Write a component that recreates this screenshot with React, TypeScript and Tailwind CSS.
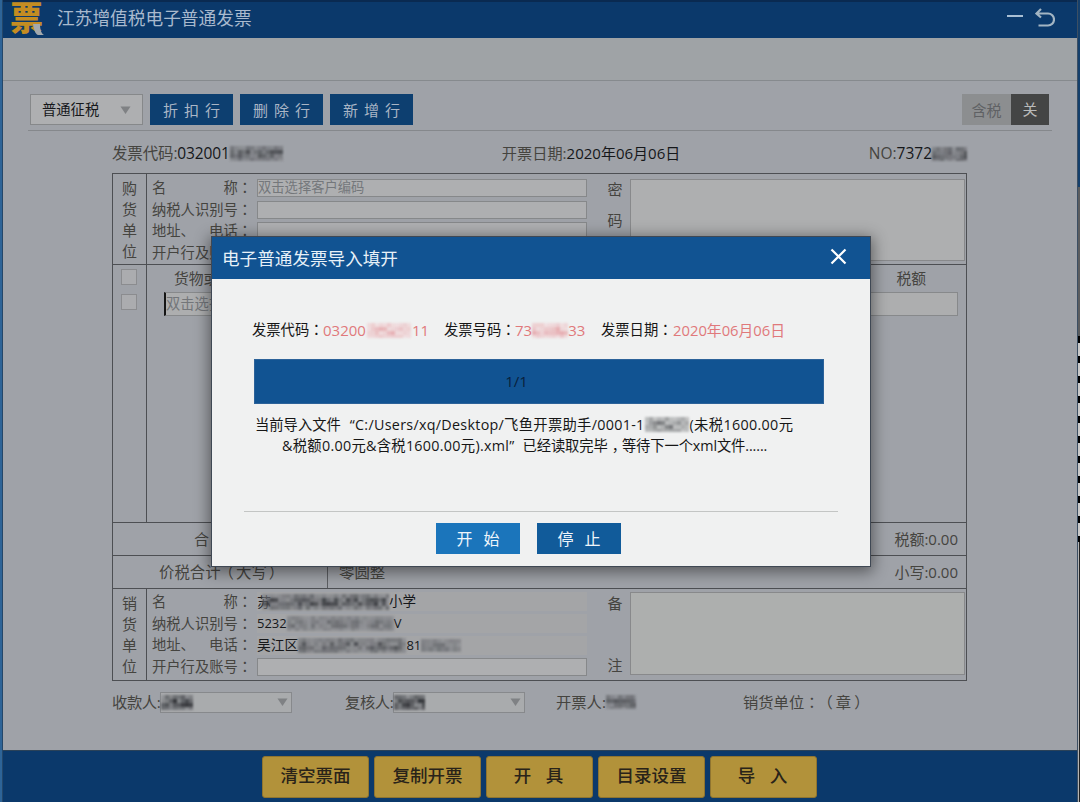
import React from "react";

/** Pixelated privacy cover for confidential values. */
function Mosaic({
  w,
  h = 14,
  color = "#33353a",
  base = "#8f9196",
  strength = 1,
  className = "",
}: {
  w: number;
  h?: number;
  color?: string;
  base?: string;
  strength?: number;
  className?: string;
}) {
  const size = 4;
  const cols = Math.ceil(w / size);
  const rows = Math.ceil(h / size);
  const cells: React.ReactNode[] = [];
  for (let r = 0; r < rows; r++) {
    for (let c = 0; c < cols; c++) {
      const edge = r === 0 || r === rows - 1 ? 0.55 : 1;
      const n = Math.sin((c + 1) * 12.9898 + (r + 1) * 78.233 + w) * 43758.5453;
      const shade = 0.1 + 0.65 * (n - Math.floor(n));
      cells.push(
        <rect
          key={`${r}-${c}`}
          x={c * size}
          y={r * size}
          width={size}
          height={size}
          fill={color}
          opacity={shade * edge * strength}
        />
      );
    }
  }
  return (
    <svg width={w} height={h} viewBox={`0 0 ${w} ${h}`} className={`block shrink-0 blur-[0.9px] ${className}`} aria-hidden>
      <rect width={w} height={h} fill={base} opacity={0.6} />
      {cells}
    </svg>
  );
}

/** Full-width punctuation, centred in its em box. */
function P({ children }: { children: string }) {
  return <span lang="zh-TW">{children}</span>;
}

function ToolButton({ label }: { label: string }) {
  return (
    <button className="flex h-[31px] w-[83px] items-center justify-center bg-[#0d3f70] pt-px pl-[6px] text-[15px] tracking-[6px] text-[#aab6c6]">
      {label}
    </button>
  );
}

function FooterButton({ label, wide }: { label: string; wide?: boolean }) {
  return (
    <button className="flex h-[42px] w-[107px] items-center justify-center rounded-[3px] border border-[#8f7430] bg-[#b2923a] pb-[3px] text-[17.5px] font-medium whitespace-pre text-[#292319]">
      <span className={wide ? "pl-[3px] tracking-[5px]" : ""}>{label}</span>
    </button>
  );
}

function SideTitle({ chars }: { chars: string[] }) {
  return (
    <div className="flex w-[34px] shrink-0 flex-col items-center border-r border-[#4d4f53] pt-[4px] text-[15px] leading-[21px]">
      {chars.map((c) => (
        <span key={c}>{c}</span>
      ))}
    </div>
  );
}

const LABELS = [["名", "称"], ["纳税人识别号"], ["地址、", "电话"], ["开户行及账号"]];

function FieldLabel({ parts }: { parts: string[] }) {
  return (
    <span className="flex w-[100px] shrink-0 justify-between text-[14.3px] leading-[20px] whitespace-nowrap">
      {parts.map((p, i) => (
        <span key={p}>
          {p}
          {i === parts.length - 1 && <P>：</P>}
        </span>
      ))}
    </span>
  );
}

function PartyRow({ index, children }: { index: number; children?: React.ReactNode }) {
  return (
    <div className="flex h-[21.7px] items-center">
      <FieldLabel parts={LABELS[index]} />
      <div className="ml-[5px] flex h-[18px] w-[330px] items-center">{children}</div>
    </div>
  );
}

function Input({ children }: { children?: React.ReactNode }) {
  return (
    <div className="flex h-[18px] w-full items-center border border-[#86888a] bg-[#aeafb1] text-[13.3px] leading-none text-[#74777b]">
      {children}
    </div>
  );
}

function ReadOnly({ children }: { children?: React.ReactNode }) {
  return (
    <div className="flex h-[19px] w-full items-center bg-[#a4a5a7] text-[14px] leading-none whitespace-nowrap text-[#15171a]">
      {children}
    </div>
  );
}

function Triangle() {
  return (
    <svg width="11" height="8" viewBox="0 0 11 8" aria-hidden>
      <path d="M0.5 0.5h10L5.5 8z" fill="#7f8184" />
    </svg>
  );
}

function PersonSelect({ w }: { w: number }) {
  return (
    <div className="flex h-[21px] w-[132px] items-center justify-between border border-[#87898c] bg-[#a9abad] pr-[3px]">
      <Mosaic w={w} h={15} color="#101216" />
      <Triangle />
    </div>
  );
}

function Dialog() {
  return (
    <div className="absolute top-[236px] left-[211px] flex h-[331px] w-[660px] flex-col border border-[#3f4854] bg-[#f0f1f1] shadow-[0_3px_14px_2px_rgba(0,0,0,0.45)]">
      <div className="flex h-[42px] shrink-0 items-center justify-between bg-[#115392] pr-[23px] pl-[10px]">
        <span className="text-[17.6px] text-[#e8f1f8]">电子普通发票导入填开</span>
        <svg width="17" height="17" viewBox="0 0 17 17" fill="none" stroke="#fff" strokeWidth="2.2" className="-mt-[3px]" aria-hidden>
          <path d="M1.5 1.5l14 14M15.5 1.5l-14 14" />
        </svg>
      </div>
      <div className="mt-[41px] flex h-[20px] items-center pl-[40px] text-[14.3px] whitespace-nowrap text-[#161616]">
        <span className="w-[71px]">
          发票代码<P>：</P>
        </span>
        <span className="flex w-[121px] items-center text-[15px] text-[#e0797b]">
          03200
          <Mosaic className="mx-px" w={44} h={15} color="#dd7f85" base="#f2dcdd" strength={0.7} />
          11
        </span>
        <span className="w-[71px]">
          发票号码<P>：</P>
        </span>
        <span className="flex w-[86px] items-center text-[15px] text-[#e0797b]">
          73
          <Mosaic w={36} h={15} color="#dd7f85" base="#f2dcdd" strength={0.7} />
          33
        </span>
        <span className="w-[71px]">
          发票日期<P>：</P>
        </span>
        <span className="ml-px text-[14.8px] text-[#e0797b]">2020年06月06日</span>
      </div>
      <div className="mt-[19px] ml-[42px] flex h-[45px] w-[570px] shrink-0 items-center justify-center border border-[#2c6299] bg-[#115392] pr-[45px] text-[15px] text-[#091f3b]">
        1/1
      </div>
      <div className="mt-[10px] flex h-[21px] items-center pl-[43px] text-[14.3px] whitespace-nowrap text-[#161616]">
        当前导入文件
        <span className="pl-[9px] tracking-[0.3px]">“C:/Users/xq/Desktop/飞鱼开票助手/0001-1</span>
        <Mosaic className="mr-px" w={44} h={15} color="#55575b" base="#b4b5b6" />
        <span className="tracking-[0.35px]">(未税1600.00元</span>
      </div>
      <div className="flex h-[21px] items-center pl-[70px] text-[14.3px] whitespace-nowrap text-[#161616]">
        <span className="tracking-[0.3px]">&amp;税额0.00元&amp;含税1600.00元).xml”</span>
        <span className="pl-[8px] tracking-[-0.1px]">
          已经读取完毕<span className="-mr-[4px] pl-[4px]">，</span>等待下一个xml文件......
        </span>
      </div>
      <div className="mx-[32px] mt-[55px] h-px w-[594px] shrink-0 bg-[#c3c5c4]" />
      <div className="mt-[11px] flex gap-[17px] pl-[224px] text-[16px] text-[#f0f6fb]">
        <button className="flex h-[31px] w-[84px] items-center justify-center gap-[11px] bg-[#1b75bb] pt-px">
          <span>开</span>
          <span>始</span>
        </button>
        <button className="flex h-[31px] w-[84px] items-center justify-center gap-[11px] bg-[#115b9a] pt-px">
          <span>停</span>
          <span>止</span>
        </button>
      </div>
    </div>
  );
}

export default function App() {
  return (
    <div
      className="relative flex h-[802px] w-[1080px] overflow-hidden bg-[#9fa2a8] font-['Open_Sans','Noto_Sans_CJK_SC',sans-serif] text-[#45443f] [text-spacing-trim:space-all]"
      lang="zh-CN"
    >
      <div className="w-[3px] shrink-0 border-r border-[#244769] bg-[#2e6497]" />
      <div className="flex min-w-0 flex-1 flex-col">
        <header className="flex h-[38px] shrink-0 items-center justify-between border-t-2 border-[#0a2a51] bg-[#0b396b] pr-[22px] pb-[4px] pl-[7px]">
          <div className="flex items-center">
            <span className="relative h-[32px] w-[34px] text-[33px] leading-[32px] font-black text-[#c48c22]">
              票
              <svg width="12" height="12" viewBox="0 0 12 12" className="absolute right-0 bottom-[-2px]" aria-hidden>
                <path d="M1 0h7c0 5 1 9 4 11H6C3 10 2 5 1 0z" fill="#a3a9ad" />
              </svg>
            </span>
            <span className="ml-[13px] text-[17.7px] text-[#a9bace]">江苏增值税电子普通发票</span>
          </div>
          <div className="flex items-center gap-[12px]">
            <span className="mb-[5px] h-[2px] w-[16px] bg-[#a9bfd4]" />
            <svg width="20" height="20" viewBox="0 0 20 20" fill="none" stroke="#a3b5c3" strokeWidth="2.2" className="-mt-px" aria-hidden>
              <path d="M6 1L1.5 5.500 6 9.500M2 5.500h11a6 6 0 0 1 0 12H3.500" />
            </svg>
          </div>
        </header>
        <div className="h-[43px] shrink-0 border-b border-[#868a8e] bg-[#9fa3a6]" />
        <div className="mx-[25px] flex h-[50px] shrink-0 items-start justify-between border-b border-[#85888c] pt-[13px] pr-[3px] pl-[2px]">
          <div className="flex gap-[7px]">
            <div className="flex h-[31px] w-[113px] items-center justify-between border border-[#86888a] bg-[#aeafb1] px-[11px] text-[14.3px] text-[#15171a]">
              普通征税
              <Triangle />
            </div>
            <ToolButton label="折扣行" />
            <ToolButton label="删除行" />
            <ToolButton label="新增行" />
          </div>
          <div className="flex h-[31px] text-[15px]">
            <span className="flex w-[49px] items-center justify-center bg-[#8c8e90] pt-[2px] text-[#5f6164]">含税</span>
            <span className="flex w-[38px] items-center justify-center bg-[#444545] text-[#babbbb]">关</span>
          </div>
        </div>
        <div className="ml-[109px] flex h-[42px] w-[855px] shrink-0 items-center pt-[3px] text-[15.5px] whitespace-nowrap">
          <div className="flex w-[390px] items-center tracking-[-0.15px]">
            发票代码:<span className="text-[#15171a]">032001</span>
            <Mosaic w={53} h={15} color="#3a3c40" />
          </div>
          <div className="w-[367px] text-[15.2px]">
            开票日期:<span className="text-[15px] text-[#15171a]">2020年06月06日</span>
          </div>
          <div className="flex items-center">
            NO:<span className="text-[#15171a]">7372</span>
            <Mosaic w={35} h={14} color="#2a2c30" />
          </div>
        </div>

        <main className="ml-[109px] flex h-[508px] w-[855px] shrink-0 flex-col border border-[#4d4f53]">
          <section className="flex h-[91px] shrink-0 border-b border-[#4d4f53]">
            <SideTitle chars={["购", "货", "单", "位"]} />
            <div className="w-[440px] pt-[3px] pl-[5px]">
              <PartyRow index={0}>
                <Input>双击选择客户编码</Input>
              </PartyRow>
              <PartyRow index={1}>
                <Input />
              </PartyRow>
              <PartyRow index={2}>
                <Input />
              </PartyRow>
              <PartyRow index={3}>
                <Input />
              </PartyRow>
            </div>
            <div className="flex w-[56px] shrink-0 flex-col items-center justify-between pt-[5px] pb-[4px] text-[15px] leading-[20px]">
              <span>密</span>
              <span>码</span>
              <span>区</span>
            </div>
            <div className="-ml-[13px] mt-[5px] h-[82px] w-[335px] border border-[#88898b] bg-[#aeafb0]" />
          </section>
          <section className="flex h-[258px] shrink-0 border-b border-[#4d4f53]">
            <div className="flex w-[34px] shrink-0 flex-col items-center gap-[9px] border-r border-[#4d4f53] pt-[4px] pr-[2px]">
              <span className="h-[16px] w-[16px] border border-[#8b8c8f] bg-[#abacaf]" />
              <span className="h-[16px] w-[16px] border border-[#8b8c8f] bg-[#abacaf]" />
            </div>
            <div className="flex flex-1 flex-col text-[14.8px]">
              <div className="flex h-[26px] items-center justify-between pr-[40px] pl-[27px]">
                <span>货物或应税劳务、服务名称</span>
                <span>税额</span>
              </div>
              <div className="mt-[1px] ml-[17px] flex h-[24px] w-[794px] items-center border border-l-2 border-[#87898b] border-l-[#151515] bg-[#adaeaf] text-[14.3px] text-[#73767a]">
                双击选择商品编码
              </div>
            </div>
          </section>
          <section className="flex h-[33px] shrink-0 items-center justify-between border-b border-[#4d4f53] pr-[8px] pl-[81px] text-[15px]">
            <span className="tracking-[15px]">合计</span>
            <span>税额:0.00</span>
          </section>
          <section className="flex h-[33px] shrink-0 items-center border-b border-[#4d4f53] pr-[8px] text-[15.4px]">
            <div className="flex h-full w-[215px] items-center border-r border-[#5c5e62] pt-[2px] pl-[46px] whitespace-nowrap">
              价税合计
              <span className="-ml-[2px]">（</span>
              <span className="mx-[2px]">大写</span>
              <span>）</span>
            </div>
            <span className="flex-1 pt-px pl-[11px]">零圆整</span>
            <span className="text-[15px]">小写:0.00</span>
          </section>
          <section className="flex min-h-0 flex-1">
            <SideTitle chars={["销", "货", "单", "位"]} />
            <div className="w-[440px] pt-[2px] pl-[5px]">
              <PartyRow index={0}>
                <ReadOnly>
                  <span>苏</span>
                  <Mosaic className="-ml-[9px]" w={127} h={16} color="#26282c" />
                  <span className="text-[13.5px]">小学</span>
                </ReadOnly>
              </PartyRow>
              <PartyRow index={1}>
                <ReadOnly>
                  <span className="text-[13px]">5232</span>
                  <Mosaic w={107} h={15} color="#606266" />
                  <span className="text-[13px]">V</span>
                </ReadOnly>
              </PartyRow>
              <PartyRow index={2}>
                <ReadOnly>
                  <span className="text-[13.8px]">吴江区</span>
                  <Mosaic w={108} h={15} color="#393b3f" />
                  <span className="text-[13px]">81</span>
                  <Mosaic w={40} h={13} color="#606266" />
                </ReadOnly>
              </PartyRow>
              <PartyRow index={3}>
                <Input />
              </PartyRow>
            </div>
            <div className="flex w-[56px] shrink-0 flex-col items-center justify-between pt-[4px] pb-[5px] text-[15px] leading-[20px]">
              <span>备</span>
              <span>注</span>
            </div>
            <div className="-ml-[13px] mt-[3px] h-[83px] w-[335px] border border-[#88898b] bg-[#adafae]" />
          </section>
        </main>

        <div className="ml-[109px] flex h-[42px] shrink-0 items-center text-[15.3px] whitespace-nowrap">
          <div className="flex w-[233px] items-center">
            <span className="w-[48px] tracking-[-0.4px]">收款人:</span>
            <PersonSelect w={32} />
          </div>
          <div className="flex w-[211px] items-center">
            <span className="w-[48px] tracking-[-0.4px]">复核人:</span>
            <PersonSelect w={31} />
          </div>
          <div className="flex w-[187px] items-center">
            开票人:
            <Mosaic w={30} h={14} color="#404246" />
          </div>
          <div className="flex">
            <span>
              销货单位<P>：</P>
            </span>
            <span className="-ml-[2px]">（</span>
            <span className="mx-[3px]">章</span>
            <span>）</span>
          </div>
        </div>
        <div className="flex-1" />
        <footer className="flex h-[52px] shrink-0 gap-[5px] border-t border-[#2b4258] bg-[#0b396b] pt-[5px] pl-[259px]">
          <FooterButton label="清空票面" />
          <FooterButton label="复制开票" />
          <FooterButton label="开 具" wide />
          <FooterButton label="目录设置" />
          <FooterButton label="导 入" wide />
        </footer>
      </div>
      <div className="flex w-[3px] shrink-0 flex-col border-l border-[#3c4f63]">
        <div className="h-[187px] shrink-0 bg-[#15406c]" />
        <div className="h-[149px] shrink-0 bg-[#5b5d5f]" />
        <div className="h-[206px] shrink-0 bg-[repeating-linear-gradient(to_bottom,#000_0_7px,#c8c8c8_7px_20px)]" />
        <div className="flex-1 border-r border-[#222] bg-[#b4b4b4]" />
      </div>
      <Dialog />
    </div>
  );
}
